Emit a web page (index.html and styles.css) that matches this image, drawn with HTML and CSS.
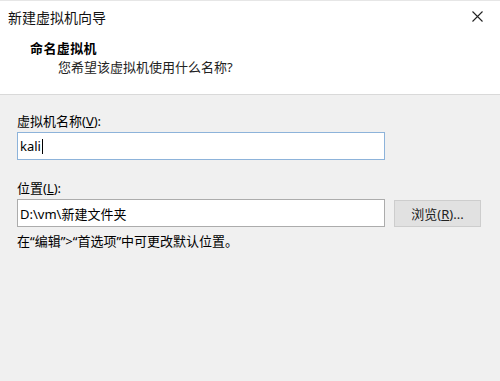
FILE: index.html
```html
<!DOCTYPE html>
<html lang="zh-CN">
<head>
    <meta charset="UTF-8">
    <meta name="viewport" content="width=device-width, initial-scale=1.0">
    <title>新建虚拟机向导</title>
    <link rel="stylesheet" href="styles.css">
</head>
<body>
    <div class="window">
        <div class="titlebar">
            <span class="title">新建虚拟机向导</span>
            <button class="close" aria-label="关闭">
                <svg width="11" height="11" viewBox="0 0 11 11">
                    <path d="M0.5 0.5 L10.5 10.5 M10.5 0.5 L0.5 10.5" stroke="#222" stroke-width="1.1" fill="none"/>
                </svg>
            </button>
        </div>

        <div class="header">
            <div class="heading">命名虚拟机</div>
            <div class="subheading">您希望该虚拟机使用什么名称?</div>
        </div>

        <form class="content">
            <label for="vmName">虚拟机名称(<u>V</u>):</label>
            <div class="row">
                <div class="field focused">kali<span class="caret"></span></div>
            </div>

            <label for="vmPath" class="second">位置(<u>L</u>):</label>
            <div class="row">
                <input type="text" id="vmPath" class="field" value="D:\vm\新建文件夹">
                <button type="button" class="browse">浏览(<u>R</u>)...</button>
            </div>

            <p class="hint">在“编辑”&gt;“首选项”中可更改默认位置。</p>
        </form>
    </div>
</body>
</html>
```

FILE: styles.css
```css
html, body {
    margin: 0;
    height: 100%;
}
body {
    font-family: "Noto Sans", "Noto Sans CJK SC", sans-serif;
    font-size: 13px;
    color: #000;
    background: #f0f0f0;
}
.window {
    height: 100%;
    border-top: 1px solid #e6e6e6;
    box-sizing: border-box;
}
.titlebar {
    height: 31px;
    background: #fff;
    display: flex;
    align-items: center;
    justify-content: space-between;
    padding-left: 8px;
}
.title {
    font-size: 14px;
    color: #111;
}
.close {
    width: 46px;
    height: 31px;
    border: none;
    background: none;
    padding: 0;
    display: flex;
    align-items: center;
    justify-content: center;
}
.header {
    height: 63px;
    background: #fff;
    border-bottom: 1px solid #d9d9d9;
    box-sizing: border-box;
    padding-top: 8px;
}
.heading {
    font-weight: bold;
    padding-left: 30px;
    line-height: 17px;
    letter-spacing: 0.4px;
}
.subheading {
    padding-left: 58px;
    margin-top: 2px;
    line-height: 17px;
    color: #222;
}
.content {
    padding: 18px 17px 0;
    margin: 0;
}
label {
    display: block;
    line-height: 16px;
}
label.second {
    margin-top: 20px;
}
.row {
    display: flex;
    gap: 9px;
    margin-top: 3px;
}
.field {
    width: 368px;
    height: 28px;
    box-sizing: border-box;
    border: 1px solid #acacac;
    background: #fff;
    padding: 0 2px;
    font: inherit;
    font-size: 13px;
    color: #000;
    outline: none;
}
div.field {
    display: flex;
    align-items: center;
}
.field.focused {
    border-color: #8db3da;
}
.caret {
    display: inline-block;
    width: 1px;
    height: 15px;
    margin-left: 1px;
    background: #000;
}
.browse {
    width: 87px;
    height: 27px;
    margin-top: 1px;
    box-sizing: border-box;
    background: #e1e1e1;
    border: 1px solid #cdcdcd;
    font: inherit;
    font-size: 13px;
    color: #222;
    padding: 0;
}
.hint {
    margin: 6px 0 0;
    line-height: 16px;
}
```
